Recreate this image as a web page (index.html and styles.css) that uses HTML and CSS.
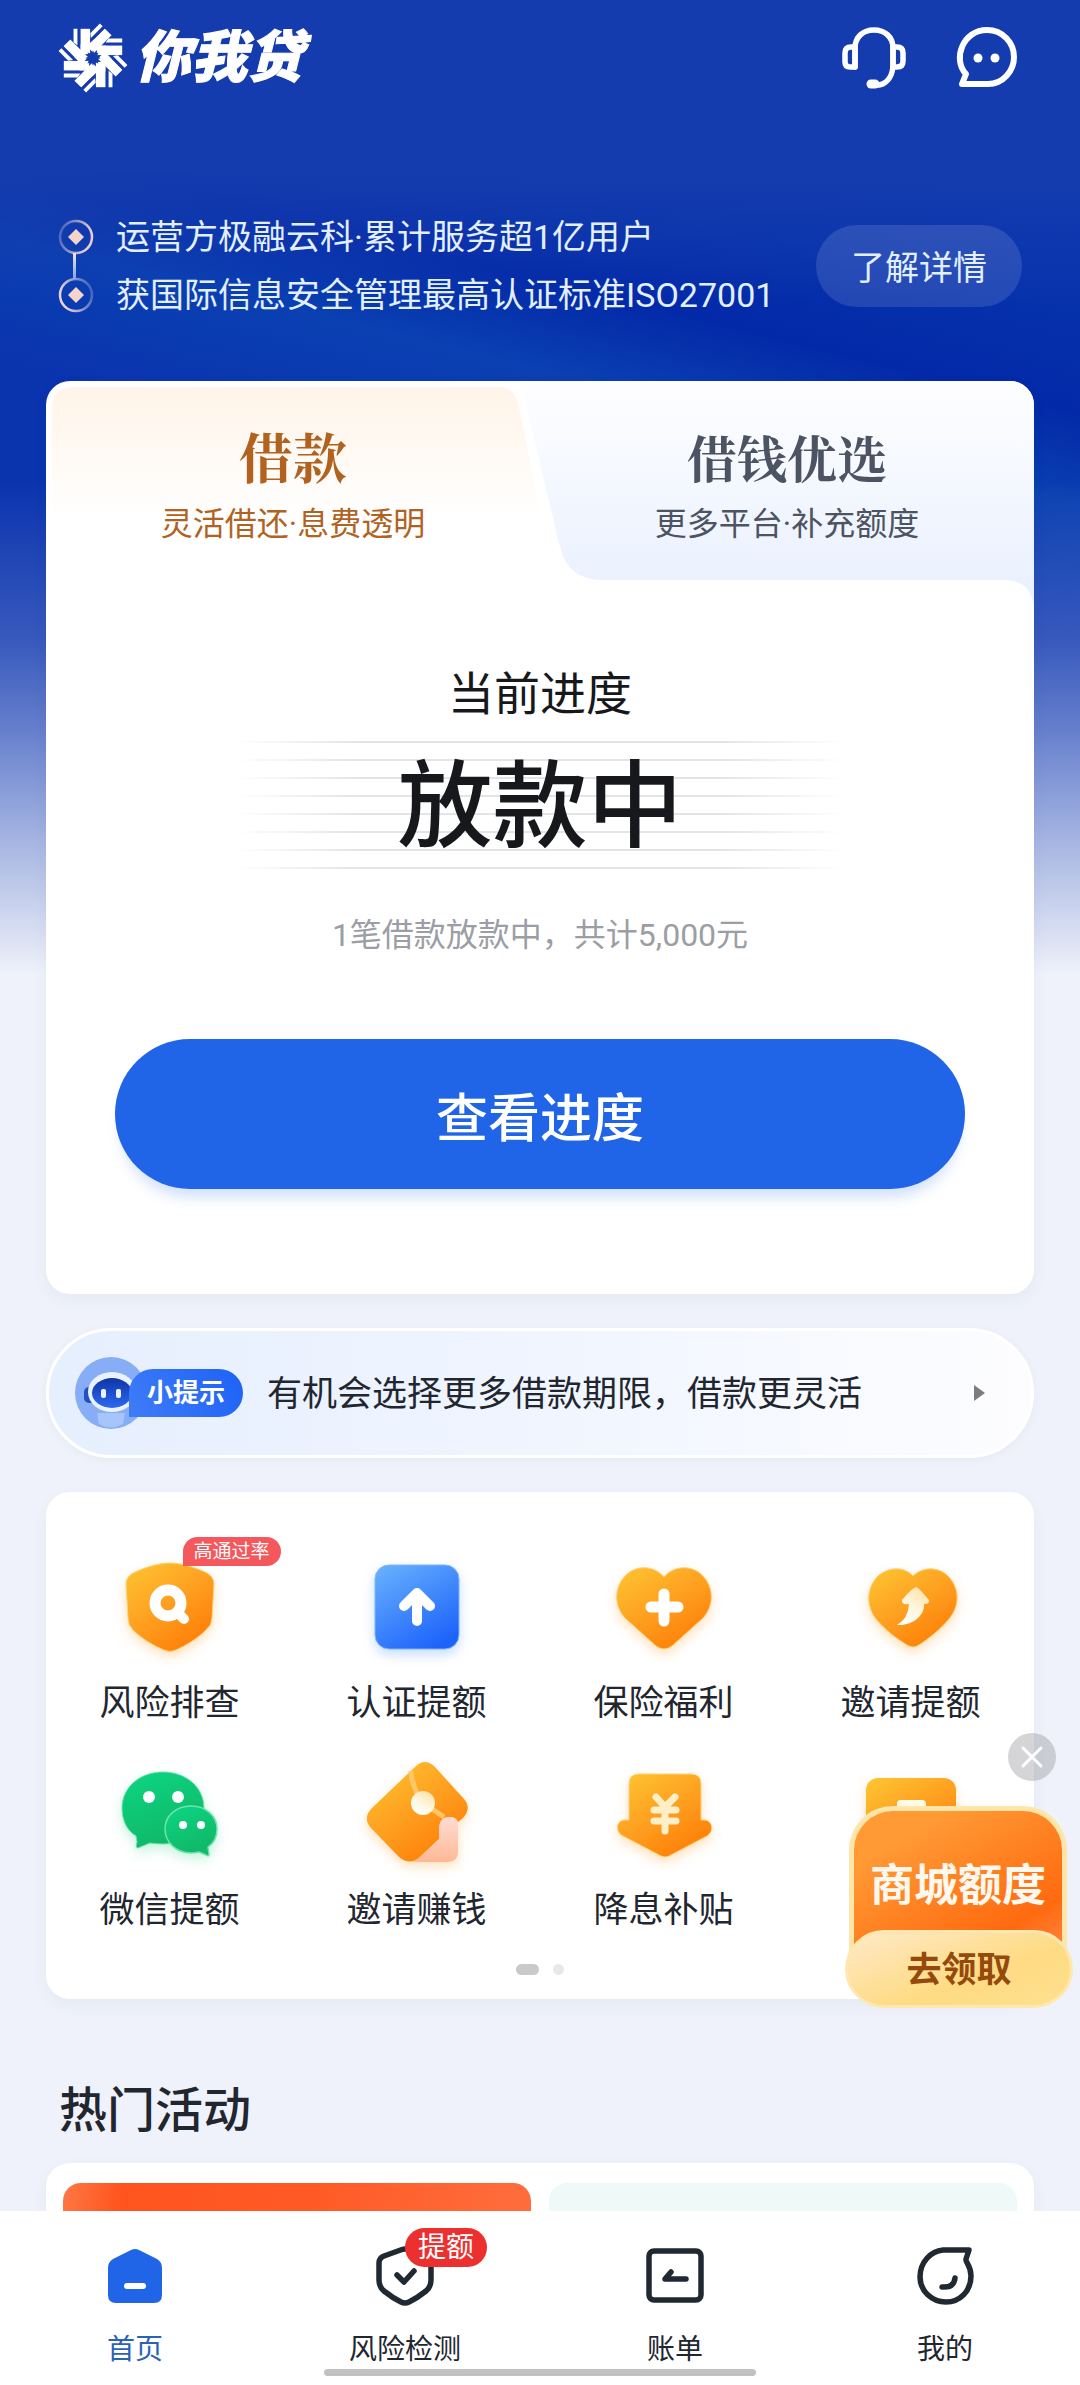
FILE: index.html
```html
<!DOCTYPE html>
<html lang="zh-CN">
<head>
<meta charset="utf-8">
<meta name="viewport" content="width=device-width, initial-scale=1">
<title>你我贷</title>
<link rel="stylesheet" href="styles.css">
</head>
<body>
<svg class="defs" width="0" height="0" aria-hidden="true">
  <defs>
    <linearGradient id="orange" x1="0.1" y1="0" x2="0.8" y2="1"><stop offset="0" stop-color="#fec330"/><stop offset="0.5" stop-color="#fe9f20"/><stop offset="1" stop-color="#fe7b04"/></linearGradient>
    <linearGradient id="blue" x1="0.1" y1="0" x2="0.7" y2="1"><stop offset="0" stop-color="#67b0fd"/><stop offset="1" stop-color="#1d63fb"/></linearGradient>
    <linearGradient id="green" x1="0" y1="0" x2="0.4" y2="1"><stop offset="0" stop-color="#0cd684"/><stop offset="1" stop-color="#10b867"/></linearGradient>
    <linearGradient id="cream" x1="0" y1="1" x2="0.6" y2="0"><stop offset="0" stop-color="#fff"/><stop offset="0.5" stop-color="#fff8e6"/><stop offset="1" stop-color="#ffe5ae"/></linearGradient>
    <linearGradient id="pink" x1="0" y1="0" x2="0" y2="1"><stop offset="0" stop-color="#ffdcd2"/><stop offset="1" stop-color="#ffb896"/></linearGradient>
    <linearGradient id="tabWarm" x1="0" y1="0" x2="0" y2="1"><stop offset="0" stop-color="#fff4e8"/><stop offset="0.75" stop-color="#fff"/></linearGradient>
    <linearGradient id="tabCool" x1="0" y1="0" x2="0" y2="1"><stop offset="0" stop-color="#fefeff"/><stop offset="0.9" stop-color="#eaf1fe"/></linearGradient>
    <linearGradient id="visor" x1="0" y1="0" x2="0" y2="1"><stop offset="0" stop-color="#1034a8"/><stop offset="1" stop-color="#2c6af0"/></linearGradient>
    <linearGradient id="link" x1="0" y1="0" x2="0" y2="1"><stop offset="0" stop-color="#f6e2e2"/><stop offset="1" stop-color="#7ea6e6"/></linearGradient>
    <linearGradient id="ringRight" x1="0" y1="0" x2="1" y2="0.3"><stop offset="0" stop-color="#3a5abc"/><stop offset="1" stop-color="#eecdd0"/></linearGradient>
    <linearGradient id="ringLeft" x1="0" y1="0.3" x2="1" y2="0"><stop offset="0" stop-color="#ecd2dc"/><stop offset="1" stop-color="#2f5abc"/></linearGradient>
  </defs>
</svg>

<div class="app">
  <main class="content">
    <header class="topbar">
      <h1 class="brand">
        <svg class="brand-mark" viewBox="-37 -37 74 74" aria-hidden="true">
          <defs>
            <g id="petal"><path d="M-13 -30H-3V-4H-13Z"/></g>
            <g id="ray"><path class="brand-gap" d="M-16 -31H-13V-14H-16Z"/><path d="M-20 -30H-16V-13L-20 -16Z"/></g>
          </defs>
          <g fill="#fff">
            <use href="#petal"/><use href="#petal" transform="rotate(45)"/><use href="#petal" transform="rotate(90)"/><use href="#petal" transform="rotate(135)"/><use href="#petal" transform="rotate(180)"/><use href="#petal" transform="rotate(225)"/><use href="#petal" transform="rotate(270)"/><use href="#petal" transform="rotate(315)"/>
            <use href="#ray"/><use href="#ray" transform="rotate(45)"/><use href="#ray" transform="rotate(90)"/><use href="#ray" transform="rotate(135)"/><use href="#ray" transform="rotate(180)"/><use href="#ray" transform="rotate(225)"/><use href="#ray" transform="rotate(270)"/><use href="#ray" transform="rotate(315)"/>
          </g>
          <path class="brand-gap" d="M0 -8L1.500 -4L5.600 -5.600L4 -1.500L8 0L4 1.500L5.600 5.600L1.500 4L0 8L-1.500 4L-5.600 5.600L-4 1.500L-8 0L-4 -1.500L-5.600 -5.600L-1.500 -4Z"/>
        </svg>
        <span>你我贷</span>
      </h1>
      <div class="topbar-actions">
        <button type="button" class="icon-button" aria-label="客服">
          <svg viewBox="0 0 64 64" fill="none" stroke="#fff" stroke-width="5.500" stroke-linejoin="round" stroke-linecap="round"><path d="M13 41V22C13 11 21 4 32 4S51 11 51 22V38C51 49 46 57 37 59"/><path d="M13 21H9Q3 21 3 27V36Q3 41 8 41H13ZM51 21H55Q61 21 61 27V35Q61 41 55 41H51Z"/><path d="M29 58H33" stroke-width="9"/></svg>
        </button>
        <button type="button" class="icon-button" aria-label="消息">
          <svg viewBox="0 0 64 64" fill="none" stroke="#fff" stroke-width="6" stroke-linejoin="round"><path d="M4 58L8 48C-6 33 5 4 29 4C45 4 56 17 56 31S45 58 30 58Z"/><g fill="#fff" stroke="none"><circle cx="20" cy="32" r="4.500"/><circle cx="37" cy="32" r="4.500"/></g></svg>
        </button>
      </div>
    </header>

    <section class="trust">
      <svg class="trust-line" viewBox="0 0 36 100" fill="none" stroke-width="2.500" aria-hidden="true">
        <circle cx="18" cy="21" r="16" stroke="url(#ringRight)"/>
        <circle cx="18" cy="79" r="16" stroke="url(#ringLeft)"/>
        <rect x="15" y="37" width="3" height="26" fill="url(#link)"/>
        <path d="M18 13L26 21L18 29L10 21ZM18 71L26 79L18 87L10 79Z" fill="#f6d3cb"/>
      </svg>
      <div class="trust-text">
        <p>运营方极融云科·累计服务超1亿用户</p>
        <p>获国际信息安全管理最高认证标准ISO27001</p>
      </div>
      <button type="button" class="trust-more">了解详情</button>
    </section>

    <section class="card loan">
      <div class="tabs" role="tablist">
        <svg class="tabs-shape" viewBox="0 0 988 228" preserveAspectRatio="none" aria-hidden="true">
          <path d="M6 28Q6 6 28 6H452Q468 6 472 22L504 180H6Z" fill="url(#tabWarm)"/>
          <path d="M464 0H988V228Q986 199 958 199H556Q522 199 514 166L480 24Q477 6 464 0Z" fill="url(#tabCool)"/>
        </svg>
        <button type="button" class="tab tab-active" role="tab" aria-selected="true"><span class="tab-title tab-title-lg">借款</span><span class="tab-sub">灵活借还·息费透明</span></button>
        <button type="button" class="tab" role="tab" aria-selected="false"><span class="tab-title">借钱优选</span><span class="tab-sub">更多平台·补充额度</span></button>
      </div>
      <div class="status">
        <p class="status-label">当前进度</p>
        <p class="status-value">放款中</p>
        <p class="status-note">1笔借款放款中，共计5,000元</p>
        <button type="button" class="primary">查看进度</button>
      </div>
    </section>

    <a class="tip" href="#tip">
      <svg class="tip-bot" viewBox="0 0 72 72" aria-hidden="true">
        <circle cx="36" cy="36" r="36" fill="#86adf6"/>
        <path d="M22 56H50L48 67Q36 74 24 67Z" fill="#a6c5fb"/>
        <rect x="9" y="30" width="12" height="16" rx="5" fill="#2450bd"/>
        <ellipse cx="37" cy="35" rx="24" ry="20" fill="#e9f2ff"/>
        <ellipse cx="37" cy="36" rx="20" ry="15" fill="url(#visor)"/>
        <rect x="26" y="32" width="5" height="9" rx="2" fill="#e6f5ff"/><rect x="41" y="32" width="5" height="9" rx="2" fill="#e6f5ff"/>
      </svg>
      <span class="tip-tag">小提示</span>
      <span class="tip-text">有机会选择更多借款期限，借款更灵活</span>
      <svg class="tip-arrow" viewBox="0 0 12 16" aria-hidden="true"><path d="M1 0L12 8L1 16Z" fill="#7c7c80"/></svg>
    </a>

    <section class="card services">
      <ul class="service-grid">
        <li><a class="service" href="#risk">
          <svg class="service-icon glow-orange" viewBox="0 0 100 100"><path d="M50 6C62 6 77 11 87 16Q94 20 94 27L92 61Q92 68 86 73C77 82 65 89 56 93Q50 96 44 93C34 89 22 82 13 73Q8 68 8 61L6 27Q6 20 13 16C23 11 38 6 50 6Z" fill="url(#orange)" stroke="#ffd27a"/><circle cx="48" cy="46" r="13" fill="none" stroke="#fff" stroke-width="11"/><path d="M60 58L64 62" stroke="#fff" stroke-width="10" stroke-linecap="round"/></svg>
          <span>风险排查</span><em class="service-flag">高通过率</em></a></li>
        <li><a class="service" href="#verify">
          <svg class="service-icon glow-blue" viewBox="0 0 100 100"><rect x="8" y="8" width="84" height="84" rx="14" fill="url(#blue)" stroke="#7fb5ff"/><path d="M50 36V64M37 49L50 36L63 49" fill="none" stroke="#fff" stroke-width="10" stroke-linecap="round" stroke-linejoin="round"/></svg>
          <span>认证提额</span></a></li>
        <li><a class="service" href="#insurance">
          <svg class="service-icon glow-orange" viewBox="0 0 100 100"><path d="M50 20C60 8 78 8 88 18C101 31 100 50 88 62L58 89Q50 95 42 89L12 62C0 50 -1 31 12 18C22 8 40 8 50 20Z" fill="url(#orange)" stroke="#ffd27a"/><path d="M50 37V64M37 50H64" stroke="#fff" stroke-width="11" stroke-linecap="round"/></svg>
          <span>保险福利</span></a></li>
        <li><a class="service" href="#invite">
          <svg class="service-icon glow-orange" viewBox="0 0 100 100"><path d="M52 19C62 9 78 10 87 19C99 31 99 49 88 62C79 73 67 82 58 88Q52 92 46 88C36 82 24 73 15 62C5 49 5 31 17 19C27 10 43 9 52 19Z" fill="url(#orange)" stroke="#ffd27a"/><path d="M55 30Q57 30 68 43Q69 47 63 47C64 58 52 69 36 68Q47 62 48 47Q40 48 41 43Q51 31 55 30Z" fill="url(#cream)"/></svg>
          <span>邀请提额</span></a></li>
        <li><a class="service" href="#wechat">
          <svg class="service-icon glow-green" viewBox="0 0 100 100"><path d="M43 8C67 8 84 24 84 44S67 80 43 80Q36 80 30 79L18 84Q15 84 17 78L16 72C6 66 2 55 2 44C2 24 19 8 43 8Z" fill="url(#green)" stroke="#6fe3ae"/><path d="M71 42C86 42 97 52 97 65Q97 77 88 83L89 90Q89 93 86 91L79 88Q75 89 71 89C56 89 45 78 45 65S56 42 71 42Z" fill="url(#green)" stroke="#6fe3ae" stroke-width="1.500"/><g fill="#fff"><circle cx="29" cy="33" r="6"/><circle cx="58" cy="33" r="6"/><circle cx="63" cy="61" r="4"/><circle cx="81" cy="61" r="4"/></g></svg>
          <span>微信提额</span></a></li>
        <li><a class="service" href="#earn">
          <svg class="service-icon glow-orange" viewBox="0 0 100 100"><path d="M48 3Q58 -7 68 3L97 35Q105 44 96 54L91 58Q89 53 83 53Q72 54 72 66V75L53 93Q43 102 32 93L4 64Q-5 54 5 44Z" fill="url(#orange)"/><path d="M72 66Q72 53 82 53Q91 53 91 62V87Q91 98 80 98H46Q50 96 54 92L72 75Z" fill="url(#pink)"/><path d="M44 7Q45 24 56 39L77 53" fill="none" stroke="#ffc766" stroke-width="5"/><circle cx="56" cy="39" r="12" fill="url(#cream)"/></svg>
          <span>邀请赚钱</span></a></li>
        <li><a class="service" href="#subsidy">
          <svg class="service-icon glow-orange" viewBox="0 0 100 100"><path d="M25 10H77Q87 10 87 20V56H91C99 57 100 68 93 72L57 91Q51 95 45 91L9 72C1 68 2 57 10 56H15V20Q15 10 25 10Z" fill="url(#orange)" stroke="#ffd27a"/><path d="M42 33L51 43L61 33M40 46H62M40 57H62M51 44V67" fill="none" stroke="#ffefc6" stroke-width="7" stroke-linecap="round" stroke-linejoin="round"/></svg>
          <span>降息补贴</span></a></li>
        <li><a class="service" href="#mall" aria-label="商城">
          <svg class="service-icon glow-orange" viewBox="0 0 100 100"><rect x="5" y="14" width="90" height="76" rx="12" fill="url(#orange)"/><rect x="36" y="36" width="29" height="30" rx="4" fill="#fffbe8"/></svg></a></li>
      </ul>
      <div class="dots" aria-hidden="true"><i class="dot dot-on"></i><i class="dot"></i></div>

      <aside class="promo">
        <button type="button" class="promo-close" aria-label="关闭"><svg viewBox="0 0 48 48" stroke="#fff" stroke-width="3" stroke-linecap="round"><path d="M15 15L33 33M33 15L15 33"/></svg></button>
        <a class="promo-card" href="#promo"><strong class="promo-title">商城额度</strong><span class="promo-cta">去领取</span></a>
      </aside>
    </section>

    <h2 class="section-title">热门活动</h2>
    <section class="card activities">
      <a class="banner banner-hot" href="#hot" aria-label="活动一"></a>
      <a class="banner banner-mint" href="#mint" aria-label="活动二"></a>
    </section>
  </main>

  <nav class="tabbar">
    <a class="nav-item nav-on" href="#home"><svg viewBox="0 0 60 60"><path d="M26 4Q30 2 34 4L52 13Q57 16 57 22V49Q57 57 49 57H11Q3 57 3 49V22Q3 16 8 13Z" fill="#2064e8"/><path d="M22 40H38" stroke="#fff" stroke-width="6" stroke-linecap="round"/></svg><span>首页</span></a>
    <a class="nav-item" href="#check"><svg viewBox="0 0 60 60" fill="none" stroke="#202832" stroke-width="5.500" stroke-linejoin="round" stroke-linecap="round"><path d="M27 3.500Q30 2.500 33 3.500L51 10Q56 12 56 17V34Q56 41 51 45C46 49 38 54 34 56Q30 58 26 56C22 54 14 49 9 45Q4 41 4 34V17Q4 12 9 10Z"/><path d="M22 29L29 36L39 25"/></svg><span>风险检测</span><em class="nav-flag">提额</em></a>
    <a class="nav-item" href="#bill"><svg viewBox="0 0 60 60" fill="none" stroke="#202832" stroke-width="5.500" stroke-linejoin="round" stroke-linecap="round"><rect x="4" y="5" width="52" height="49" rx="5"/><path d="M41 33H20L26 26"/></svg><span>账单</span></a>
    <a class="nav-item" href="#me"><svg viewBox="0 0 60 60" fill="none" stroke="#202832" stroke-width="5.500" stroke-linejoin="round" stroke-linecap="round"><path d="M28 4H54L51 13C50 16 56 19 56 30C56 45 45 56 31 56S5 45 5 31C5 16 16 5 28 4Z"/><path d="M27 41Q39 42 40 32"/></svg><span>我的</span></a>
  </nav>
</div>
</body>
</html>
```
FILE: styles.css
```css
* { box-sizing: border-box; }

body {
  margin: 0;
  background: #eff2fa;
  color: #22262f;
  font-family: Roboto, "Noto Sans CJK SC", sans-serif;
}

h1, h2, p, ul { margin: 0; padding: 0; }
ul { list-style: none; }
em, i { font-style: normal; }
a { color: inherit; text-decoration: none; }
button {
  margin: 0;
  padding: 0;
  border: 0;
  background: none;
  color: inherit;
  font: inherit;
  cursor: pointer;
}
svg { display: block; overflow: visible; }
.defs { position: absolute; }

.app {
  display: flex;
  flex-direction: column;
  height: 100vh;
}

.content {
  flex: 1;
  min-height: 0;
  overflow: hidden auto;
  scrollbar-width: none;
  padding: 0 46px;
  background:
    linear-gradient(180deg, #153cae 0, #153cae 170px, rgba(21, 60, 174, 0) 300px),
    linear-gradient(180deg, rgba(239, 242, 250, 0) 480px, rgba(239, 242, 250, 0.2) 640px, rgba(239, 242, 250, 0.4) 730px, rgba(239, 242, 250, 0.7) 850px, #eff2fa 975px),
    linear-gradient(194deg, #0a35b2 150px, #0632ac 300px, #0329a8 400px, #0a40b2 490px, #0a33ae 620px, #0a33ae 1000px);
}

.topbar {
  display: flex;
  justify-content: space-between;
  align-items: center;
  height: 116px;
  padding: 0 12px 0 11px;
}
.brand {
  display: flex;
  align-items: center;
  gap: 6px;
  color: #fff;
  font-size: 56px;
  font-weight: 900;
  font-style: italic;
  line-height: 72px;
  -webkit-text-stroke: 1px #fff;
}
.brand-mark { width: 72px; height: 72px; }
.brand-gap { fill: #153cae; }
.topbar-actions { display: flex; gap: 52px; }
.icon-button, .icon-button svg { width: 64px; height: 64px; }

.trust {
  display: flex;
  align-items: center;
  height: 265px;
  padding: 34px 12px 0;
  color: #e2efff;
  font-size: 34px;
}
.trust-line { flex: none; width: 36px; height: 100px; }
.trust-text { flex: 1; padding-left: 22px; white-space: nowrap; line-height: 58px; }
.trust-more {
  flex: none;
  width: 206px;
  height: 82px;
  border-radius: 41px;
  background: rgba(255, 255, 255, 0.12);
}

.card {
  border-radius: 24px;
  background: #fff;
  box-shadow: 0 6px 16px rgba(60, 70, 120, 0.05);
}

.loan { overflow: hidden; padding-bottom: 105px; }
.tabs { position: relative; display: flex; height: 228px; }
.tabs-shape { position: absolute; inset: 0; width: 100%; height: 100%; }
.tab {
  position: relative;
  flex: 1;
  display: flex;
  flex-direction: column;
  align-items: center;
  padding: 44px 0 0;
  color: #4c5464;
}
.tab-active { color: #b2621f; }
.tab-title {
  font-family: Roboto, "Noto Serif CJK SC", "Noto Sans CJK SC", serif;
  font-size: 50px;
  font-weight: 700;
  line-height: 72px;
}
.tab-title-lg { font-size: 54px; }
.tab-sub { font-size: 32px; line-height: 54px; }

.status {
  display: flex;
  flex-direction: column;
  align-items: center;
  padding: 51px 69px 0;
}
.status-label { color: #16181c; font-size: 46px; line-height: 68px; }
.status-value {
  width: 608px;
  margin-top: 13px;
  padding-top: 6px;
  color: #16181c;
  font-size: 95px;
  font-weight: 500;
  line-height: 122px;
  text-align: center;
  background:
    linear-gradient(90deg, #fff, rgba(255, 255, 255, 0) 20%, rgba(255, 255, 255, 0) 80%, #fff),
    repeating-linear-gradient(180deg, #e3e4e6 0, #e3e4e6 2px, #fff 2px, #fff 18px);
}
.status-note { margin-top: 38px; color: #9b9ea4; font-size: 32px; line-height: 56px; }
.primary {
  align-self: stretch;
  height: 150px;
  margin-top: 76px;
  border-radius: 75px;
  background: #2064e8;
  color: #fff;
  font-size: 52px;
  font-weight: 500;
  box-shadow: 0 14px 14px -6px rgba(32, 100, 232, 0.2);
}

.tip {
  display: flex;
  align-items: center;
  height: 130px;
  margin-top: 34px;
  padding: 0 46px 0 26px;
  border: 3px solid #fff;
  border-radius: 65px;
  background: linear-gradient(90deg, #e6effe, #f0f5ff 50%, #fdfdff);
  box-shadow: 0 2px 10px rgba(60, 70, 120, 0.05);
}
.tip-bot { flex: none; width: 72px; height: 72px; }
.tip-tag {
  position: relative;
  width: 114px;
  margin-left: -18px;
  border-radius: 24px 24px 24px 0;
  background: linear-gradient(60deg, #3f7cf8, #1d62f6);
  color: #fff;
  font-size: 26px;
  font-weight: 700;
  line-height: 48px;
  text-align: center;
}
.tip-text {
  flex: 1;
  padding: 4px 0 0 24px;
  font-size: 35px;
  line-height: 50px;
  white-space: nowrap;
}
.tip-arrow { width: 12px; height: 16px; }

.services { position: relative; margin-top: 34px; padding: 65px 0 24px; }
.service-grid {
  display: grid;
  grid-template-columns: repeat(4, 1fr);
  row-gap: 37px;
}
.service {
  position: relative;
  display: flex;
  flex-direction: column;
  align-items: center;
  gap: 22px;
  height: 170px;
  font-size: 35px;
  line-height: 50px;
}
.service-icon { width: 100px; height: 100px; }
.glow-orange { filter: drop-shadow(0 5px 6px rgba(255, 160, 40, 0.3)); }
.glow-blue { filter: drop-shadow(0 5px 6px rgba(70, 140, 255, 0.3)); }
.glow-green { filter: drop-shadow(0 5px 6px rgba(30, 210, 130, 0.25)); }
.service-flag {
  position: absolute;
  top: -20px;
  left: calc(50% + 13px);
  padding: 1px 11px 0;
  border-radius: 15px 15px 15px 0;
  background: #f4585c;
  color: #fff;
  font-size: 19px;
  line-height: 28px;
  white-space: nowrap;
}
.dots { display: flex; justify-content: center; gap: 14px; margin-top: 30px; }
.dot { width: 11px; height: 11px; border-radius: 6px; background: #e8e8e8; }
.dot-on { width: 23px; background: #c9c9c9; }

.promo {
  position: absolute;
  right: -39px;
  bottom: -9px;
  width: 228px;
}
.promo-close {
  display: block;
  margin: 0 17px 25px auto;
  border-radius: 50%;
  background: rgba(150, 150, 155, 0.4);
}
.promo-close svg { width: 48px; height: 48px; }
.promo-card {
  display: flex;
  flex-direction: column;
}
.promo-title {
  height: 160px;
  margin: 0 6px 0 4px;
  border: 5px solid #ffe5a8;
  border-bottom: 0;
  border-radius: 44px 44px 0 0;
  background: linear-gradient(150deg, #ff9a34 20%, #ff6a10 75%, #ff8a4a);
  color: #fff8ee;
  font-size: 44px;
  line-height: 150px;
  text-align: center;
}
.promo-cta {
  margin-top: -36px;
  padding-top: 4px;
  border: 3px solid #ffe8b0;
  border-radius: 39px;
  background: linear-gradient(160deg, #ffe9c8, #fedb83 60%, #fee08e);
  color: #954a0c;
  font-size: 35px;
  font-weight: 700;
  line-height: 68px;
  text-align: center;
}

.section-title {
  margin: 76px 0 16px;
  padding-left: 13px;
  font-size: 48px;
  font-weight: 500;
  line-height: 72px;
}
.activities { display: flex; gap: 18px; padding: 20px 17px; }
.banner { flex: 1; height: 200px; border-radius: 18px; }
.banner-hot { background: linear-gradient(100deg, #ff7844, #ff541e 12%, #ff5a26 50%, #ff7040); }
.banner-mint { background: #eff9f7; }

.tabbar {
  flex: none;
  position: relative;
  display: flex;
  height: 174px;
  padding-top: 35px;
  background: #fff;
}
.tabbar::after {
  content: "";
  position: absolute;
  bottom: 9px;
  left: 30%;
  width: 40%;
  height: 7px;
  border-radius: 4px;
  background: #c2c2c2;
}
.nav-item {
  position: relative;
  flex: 1;
  display: flex;
  flex-direction: column;
  align-items: center;
  gap: 24px;
  font-size: 28px;
  line-height: 40px;
}
.nav-item svg { width: 60px; height: 60px; }
.nav-on { color: #2b62b4; }
.nav-flag {
  position: absolute;
  top: -18px;
  left: 50%;
  padding: 1px 13px 0;
  border-radius: 20px;
  background: #ec3030;
  color: #fff;
  line-height: 38px;
}
```
